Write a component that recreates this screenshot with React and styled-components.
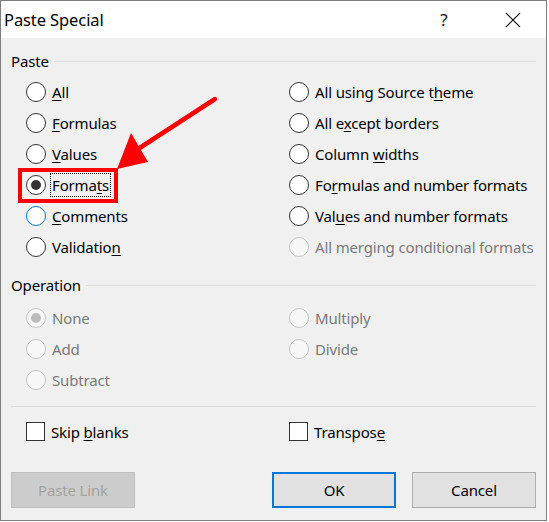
import React from 'react';
import styled, { createGlobalStyle } from 'styled-components';

const GlobalStyle = createGlobalStyle`
  body {
    margin: 0;
    background: #ffffff;
    font-family: "Noto Sans", "Open Sans", sans-serif;
  }
`;

const Dialog = styled.div`
  position: relative;
  width: 547px;
  height: 521px;
  box-sizing: border-box;
  border: 1px solid #7d7d7d;
  background: #f0f0f0;
  color: #000;
`;

const TitleBar = styled.div`
  height: 37px;
  background: #ffffff;
  display: flex;
  align-items: center;
  padding-left: 3px;
  padding-right: 10px;
`;

const Title = styled.div`
  flex: 1;
  font-size: 16.5px;
  letter-spacing: -0.1px;
`;

const CaptionButton = styled.div`
  width: 46px;
  height: 37px;
  margin-right: ${p => p.$space || 0}px;
  display: flex;
  align-items: center;
  justify-content: center;
  font-size: 17px;
  color: #111;
`;

const Body = styled.div`
  padding: 0 10px;
`;

const GroupHeader = styled.div`
  display: flex;
  align-items: center;
  height: 20px;
  margin-top: ${p => p.$top}px;
  font-size: 15px;
  letter-spacing: -0.15px;

  &::after {
    content: '';
    flex: 1;
    height: 1px;
    background: #dcdcdc;
    margin-left: 5px;
  }
`;

const OptionGrid = styled.div`
  display: grid;
  grid-template-columns: 263px 1fr;
  grid-auto-rows: 31px;
  padding-left: 15px;
  margin-top: ${p => p.$top}px;
`;

const Option = styled.div`
  display: flex;
  align-items: center;
  gap: 6px;
  font-size: 15px;
  color: ${p => (p.$disabled ? '#7a7a7a' : '#000')};
  letter-spacing: -0.15px;

  u {
    text-underline-offset: 2px;
  }
`;

const Radio = styled.span`
  width: 20px;
  height: 20px;
  box-sizing: border-box;
  border-radius: 50%;
  flex-shrink: 0;
  border: 1px solid
    ${p => (p.$disabled ? '#c4c4c4' : p.$hover ? '#0078d7' : '#333333')};
  background: ${p => (p.$disabled ? '#f7f7f7' : '#ffffff')};
  display: flex;
  align-items: center;
  justify-content: center;

  &::after {
    content: '';
    display: ${p => (p.$checked ? 'block' : 'none')};
    width: 10px;
    height: 10px;
    border-radius: 50%;
    background: ${p => (p.$disabled ? '#bcbcbc' : '#333333')};
  }
`;

const Label = styled.span`
  padding: 1px 1px;
  margin: -2px -2px;
  border: 1px dotted ${p => (p.$focus ? '#000' : 'transparent')};
  line-height: 20px;
`;

const Separator = styled.div`
  height: 1px;
  background: #dcdcdc;
  margin-top: ${p => p.$top}px;
`;

const Checkbox = styled.span`
  width: 19px;
  height: 19px;
  box-sizing: border-box;
  border: 1px solid #333333;
  background: #ffffff;
  flex-shrink: 0;
`;

const ButtonRow = styled.div`
  display: flex;
  justify-content: space-between;
  margin-top: ${p => p.$top}px;
`;

const ButtonGroup = styled.div`
  display: flex;
  gap: 16px;
`;

const Button = styled.div`
  width: 124px;
  height: 36px;
  box-sizing: border-box;
  display: flex;
  align-items: center;
  justify-content: center;
  font-size: 15px;
  letter-spacing: -0.15px;
  background: ${p => (p.$disabled ? '#cccccc' : '#e1e1e1')};
  color: ${p => (p.$disabled ? '#a3a3a3' : '#000')};
  border: ${p =>
    p.$default ? '2px solid #0078d7' : p.$disabled ? '1px solid #bfbfbf' : '1px solid #adadad'};
`;

const Overlay = styled.svg`
  position: absolute;
  top: -1px;
  left: -1px;
  pointer-events: none;
`;

const pasteLeft = [
  { key: 'all', label: <><u>A</u>ll</> },
  { key: 'formulas', label: <><u>F</u>ormulas</> },
  { key: 'values', label: <><u>V</u>alues</> },
  { key: 'formats', label: <>Forma<u>t</u>s</>, checked: true, focus: true },
  { key: 'comments', label: <><u>C</u>omments</>, hover: true },
  { key: 'validation', label: <>Validatio<u>n</u></> },
];

const pasteRight = [
  { key: 'theme', label: <>All using Source t<u>h</u>eme</> },
  { key: 'borders', label: <>All e<u>x</u>cept borders</> },
  { key: 'widths', label: <>Column <u>w</u>idths</> },
  { key: 'fnum', label: <>Fo<u>r</u>mulas and number formats</> },
  { key: 'vnum', label: <>Val<u>u</u>es and number formats</> },
  { key: 'merge', label: <>All merging conditional formats</>, disabled: true },
];

const opLeft = [
  { key: 'none', label: 'None', checked: true },
  { key: 'add', label: 'Add' },
  { key: 'sub', label: 'Subtract' },
];

const opRight = [
  { key: 'mul', label: 'Multiply' },
  { key: 'div', label: 'Divide' },
];

// interleave two columns into grid order
function rows(left, right) {
  const out = [];
  const n = Math.max(left.length, right.length);
  for (let i = 0; i < n; i++) {
    out.push(left[i] || { key: 'l' + i, empty: true });
    out.push(right[i] || { key: 'r' + i, empty: true });
  }
  return out;
}

const RadioOption = ({ item, disabled }) => {
  if (item.empty) return <div />;
  const off = disabled || item.disabled;
  return (
    <Option $disabled={off}>
      <Radio $checked={item.checked} $hover={item.hover} $disabled={off} />
      <Label $focus={item.focus}>{item.label}</Label>
    </Option>
  );
};

export default function App() {
  return (
    <>
      <GlobalStyle />
      <Dialog>
        <TitleBar>
          <Title>Paste Special</Title>
          <CaptionButton $space={23}>?</CaptionButton>
          <CaptionButton>
            <svg width="16" height="16" viewBox="0 0 16 16">
              <path d="M1 1 L15 15 M15 1 L1 15" stroke="#111" strokeWidth="1.1" fill="none" />
            </svg>
          </CaptionButton>
        </TitleBar>
        <Body>
          <GroupHeader $top={13}>Paste</GroupHeader>
          <OptionGrid $top={5}>
            {rows(pasteLeft, pasteRight).map(item => (
              <RadioOption key={item.key} item={item} />
            ))}
          </OptionGrid>

          <GroupHeader $top={13}>Operation</GroupHeader>
          <OptionGrid $top={7}>
            {rows(opLeft, opRight).map(item => (
              <RadioOption key={item.key} item={item} disabled />
            ))}
          </OptionGrid>

          <Separator $top={11} />

          <OptionGrid $top={9}>
            <Option>
              <Checkbox />
              <Label>Skip <u>b</u>lanks</Label>
            </Option>
            <Option>
              <Checkbox />
              <Label>Transpos<u>e</u></Label>
            </Option>
          </OptionGrid>

          <ButtonRow $top={25}>
            <Button $disabled>Paste Link</Button>
            <ButtonGroup>
              <Button $default>OK</Button>
              <Button>Cancel</Button>
            </ButtonGroup>
          </ButtonRow>
        </Body>

        <Overlay width="549" height="522" viewBox="0 0 549 522">
          <rect x="20" y="170" width="96" height="31" fill="none" stroke="#ff0000" strokeWidth="4" />
          <line x1="215" y1="99" x2="138" y2="149" stroke="#ff0000" strokeWidth="4.5" strokeLinecap="round" />
          <polygon points="117,169 131,133 148,162" fill="#ff0000" />
        </Overlay>
      </Dialog>
    </>
  );
}
